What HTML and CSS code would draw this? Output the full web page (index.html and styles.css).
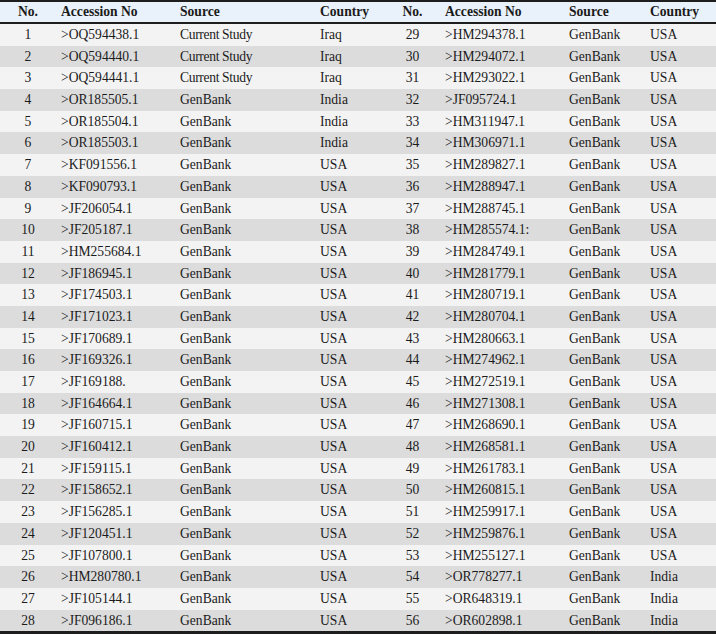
FILE: index.html
```html
<!DOCTYPE html>
<html>
<head>
<meta charset="utf-8">
<link rel="stylesheet" href="styles.css">
</head>
<body>
<table class="acc">
<colgroup>
<col class="c1"><col class="c2"><col class="c3"><col class="c4"><col class="c5"><col class="c6"><col class="c7"><col class="c8">
</colgroup>
<thead>
<tr><th class="num">No.</th><th>Accession No</th><th>Source</th><th>Country</th><th class="num">No.</th><th>Accession No</th><th>Source</th><th>Country</th></tr>
</thead>
<tbody>
<tr><td class="num">1</td><td>&gt;OQ594438.1</td><td class="study">Current Study</td><td>Iraq</td><td class="num">29</td><td>&gt;HM294378.1</td><td>GenBank</td><td>USA</td></tr>
<tr><td class="num">2</td><td>&gt;OQ594440.1</td><td class="study">Current Study</td><td>Iraq</td><td class="num">30</td><td>&gt;HM294072.1</td><td>GenBank</td><td>USA</td></tr>
<tr><td class="num">3</td><td>&gt;OQ594441.1</td><td class="study">Current Study</td><td>Iraq</td><td class="num">31</td><td>&gt;HM293022.1</td><td>GenBank</td><td>USA</td></tr>
<tr><td class="num">4</td><td>&gt;OR185505.1</td><td>GenBank</td><td>India</td><td class="num">32</td><td>&gt;JF095724.1</td><td>GenBank</td><td>USA</td></tr>
<tr><td class="num">5</td><td>&gt;OR185504.1</td><td>GenBank</td><td>India</td><td class="num">33</td><td>&gt;HM311947.1</td><td>GenBank</td><td>USA</td></tr>
<tr><td class="num">6</td><td>&gt;OR185503.1</td><td>GenBank</td><td>India</td><td class="num">34</td><td>&gt;HM306971.1</td><td>GenBank</td><td>USA</td></tr>
<tr><td class="num">7</td><td>&gt;KF091556.1</td><td>GenBank</td><td>USA</td><td class="num">35</td><td>&gt;HM289827.1</td><td>GenBank</td><td>USA</td></tr>
<tr><td class="num">8</td><td>&gt;KF090793.1</td><td>GenBank</td><td>USA</td><td class="num">36</td><td>&gt;HM288947.1</td><td>GenBank</td><td>USA</td></tr>
<tr><td class="num">9</td><td>&gt;JF206054.1</td><td>GenBank</td><td>USA</td><td class="num">37</td><td>&gt;HM288745.1</td><td>GenBank</td><td>USA</td></tr>
<tr><td class="num">10</td><td>&gt;JF205187.1</td><td>GenBank</td><td>USA</td><td class="num">38</td><td>&gt;HM285574.1:</td><td>GenBank</td><td>USA</td></tr>
<tr><td class="num">11</td><td>&gt;HM255684.1</td><td>GenBank</td><td>USA</td><td class="num">39</td><td>&gt;HM284749.1</td><td>GenBank</td><td>USA</td></tr>
<tr><td class="num">12</td><td>&gt;JF186945.1</td><td>GenBank</td><td>USA</td><td class="num">40</td><td>&gt;HM281779.1</td><td>GenBank</td><td>USA</td></tr>
<tr><td class="num">13</td><td>&gt;JF174503.1</td><td>GenBank</td><td>USA</td><td class="num">41</td><td>&gt;HM280719.1</td><td>GenBank</td><td>USA</td></tr>
<tr><td class="num">14</td><td>&gt;JF171023.1</td><td>GenBank</td><td>USA</td><td class="num">42</td><td>&gt;HM280704.1</td><td>GenBank</td><td>USA</td></tr>
<tr><td class="num">15</td><td>&gt;JF170689.1</td><td>GenBank</td><td>USA</td><td class="num">43</td><td>&gt;HM280663.1</td><td>GenBank</td><td>USA</td></tr>
<tr><td class="num">16</td><td>&gt;JF169326.1</td><td>GenBank</td><td>USA</td><td class="num">44</td><td>&gt;HM274962.1</td><td>GenBank</td><td>USA</td></tr>
<tr><td class="num">17</td><td>&gt;JF169188.</td><td>GenBank</td><td>USA</td><td class="num">45</td><td>&gt;HM272519.1</td><td>GenBank</td><td>USA</td></tr>
<tr><td class="num">18</td><td>&gt;JF164664.1</td><td>GenBank</td><td>USA</td><td class="num">46</td><td>&gt;HM271308.1</td><td>GenBank</td><td>USA</td></tr>
<tr><td class="num">19</td><td>&gt;JF160715.1</td><td>GenBank</td><td>USA</td><td class="num">47</td><td>&gt;HM268690.1</td><td>GenBank</td><td>USA</td></tr>
<tr><td class="num">20</td><td>&gt;JF160412.1</td><td>GenBank</td><td>USA</td><td class="num">48</td><td>&gt;HM268581.1</td><td>GenBank</td><td>USA</td></tr>
<tr><td class="num">21</td><td>&gt;JF159115.1</td><td>GenBank</td><td>USA</td><td class="num">49</td><td>&gt;HM261783.1</td><td>GenBank</td><td>USA</td></tr>
<tr><td class="num">22</td><td>&gt;JF158652.1</td><td>GenBank</td><td>USA</td><td class="num">50</td><td>&gt;HM260815.1</td><td>GenBank</td><td>USA</td></tr>
<tr><td class="num">23</td><td>&gt;JF156285.1</td><td>GenBank</td><td>USA</td><td class="num">51</td><td>&gt;HM259917.1</td><td>GenBank</td><td>USA</td></tr>
<tr><td class="num">24</td><td>&gt;JF120451.1</td><td>GenBank</td><td>USA</td><td class="num">52</td><td>&gt;HM259876.1</td><td>GenBank</td><td>USA</td></tr>
<tr><td class="num">25</td><td>&gt;JF107800.1</td><td>GenBank</td><td>USA</td><td class="num">53</td><td>&gt;HM255127.1</td><td>GenBank</td><td>USA</td></tr>
<tr><td class="num">26</td><td>&gt;HM280780.1</td><td>GenBank</td><td>USA</td><td class="num">54</td><td>&gt;OR778277.1</td><td>GenBank</td><td>India</td></tr>
<tr><td class="num">27</td><td>&gt;JF105144.1</td><td>GenBank</td><td>USA</td><td class="num">55</td><td>&gt;OR648319.1</td><td>GenBank</td><td>India</td></tr>
<tr><td class="num">28</td><td>&gt;JF096186.1</td><td>GenBank</td><td>USA</td><td class="num">56</td><td>&gt;OR602898.1</td><td>GenBank</td><td>India</td></tr>
</tbody>
</table>
</body>
</html>
```
FILE: styles.css
```css
html, body {
  margin: 0;
  padding: 0;
  background: #ffffff;
}
.acc {
  width: 716px;
  border-collapse: separate;
  border-spacing: 0;
  table-layout: fixed;
  font-family: "Liberation Serif", "Times New Roman", serif;
  font-size: 13.6px;
  color: #1b1b1b;
  border-top: 2px solid #1e1e1e;
  border-bottom: 4px solid #1e1e1e;
}
.c1 { width: 56px; }
.c2 { width: 119px; }
.c3 { width: 140px; }
.c4 { width: 70px; }
.c5 { width: 55px; }
.c6 { width: 124px; }
.c7 { width: 81px; }
.c8 { width: 71px; }
.acc th, .acc td {
  padding: 0 0 0 5px;
  text-align: left;
  white-space: nowrap;
  vertical-align: middle;
}
.acc th {
  font-weight: bold;
  line-height: 20px;
  background: #e9f1fa;
  border-bottom: 2px solid #1e1e1e;
}
.acc td {
  line-height: 21.68px;
}
.acc .num {
  text-align: center;
  padding: 0;
}
.acc .study {
  letter-spacing: -0.35px;
}
.acc tbody tr:nth-child(odd) td { background: #f3f3f3; }
.acc tbody tr:nth-child(even) td { background: #dcdcdc; }
```
